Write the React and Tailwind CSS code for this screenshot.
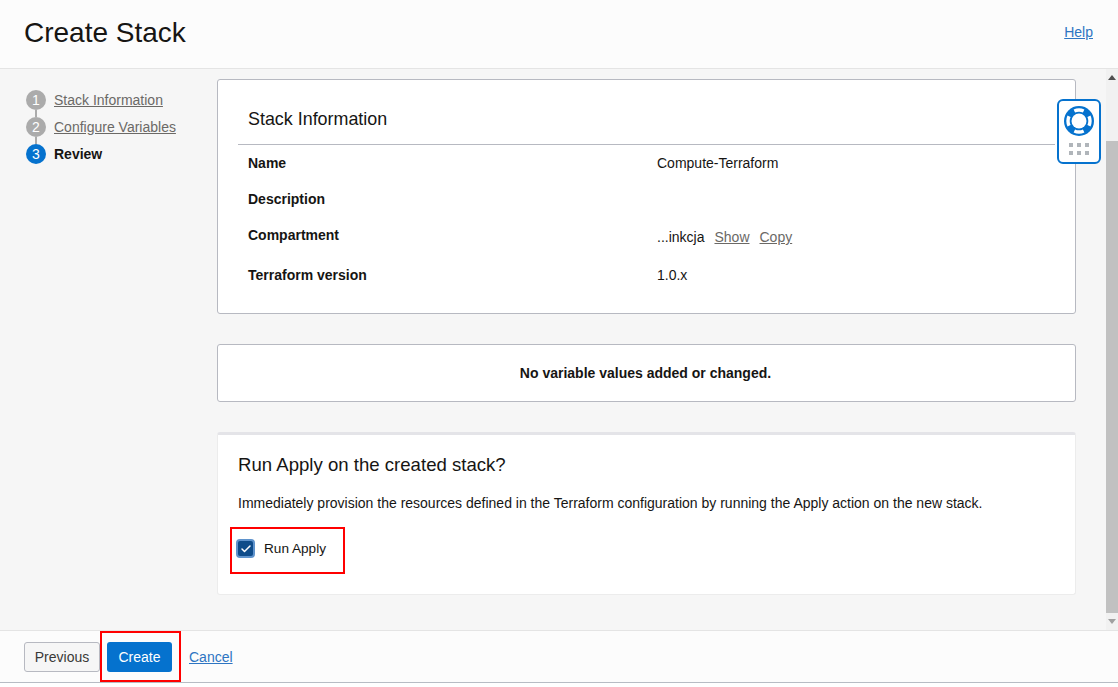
import { Check } from 'lucide-react';

const steps = [
    { n: 1, label: 'Stack Information' },
    { n: 2, label: 'Configure Variables' },
];

const InfoRow = ({ label, className, children }) => (
    <div className={`flex text-[14px] leading-4 text-[#161513] ${className}`}>
        <div className="w-[419px] pl-[10px] font-bold">{label}</div>
        <div className="flex-1">{children}</div>
    </div>
);

const HelpWidget = () => (
    <div className="absolute left-[1057px] top-[99px] w-[44px] h-[65px] bg-white border-2 border-[#0572ce] rounded-[6px] flex flex-col items-center pt-[5px]">
        <svg width="30" height="30" viewBox="0 0 30 30">
            <circle cx="15" cy="15" r="15" fill="#0572ce" />
            <circle cx="15" cy="15" r="11" fill="none" stroke="#fff" strokeWidth="3.4" pathLength="40" strokeDasharray="5.6 4.4" strokeDashoffset="2.8" />
            <circle cx="15" cy="15" r="7.5" fill="#fff" />
        </svg>
        <div className="grid grid-cols-3 gap-x-[4px] gap-y-[4px] mt-[7px]">
            {[0, 1, 2, 3, 4, 5].map((i) => (
                <span key={i} className="w-[4px] h-[4px] bg-[#b0b5ba]" />
            ))}
        </div>
    </div>
);

const App = () => {
    return (
        <div className="relative w-[1118px] h-[687px] overflow-hidden bg-white flex flex-col font-['Liberation_Sans',Arial,sans-serif] text-[#161513]">
            <header className="h-[69px] shrink-0 bg-[#fcfcfc] border-b border-[#e4e4e4] flex items-center justify-between pl-[24px] pr-[25px]">
                <h1 className="text-[28px] leading-8 mb-[2px]">Create Stack</h1>
                <a className="text-[14px] text-[#2e75c2] underline mb-[3px]">Help</a>
            </header>

            <div className="flex-1 min-h-0 flex bg-[#f6f6f6]">
                <nav className="w-[217px] shrink-0 pl-[26px] pt-[21px]">
                    <div className="flex flex-col">
                        {steps.map((s) => (
                            <div key={s.n} className="relative h-[27px] flex items-start">
                                <span className="w-[20px] h-[20px] rounded-full bg-[#ababab] text-white text-[14px] leading-5 text-center shrink-0">{s.n}</span>
                                <span className="absolute left-[9px] top-[20px] w-[2px] h-[7px] bg-[#ababab]" />
                                <a className="ml-[8px] text-[14px] leading-5 text-[#6b6966] underline">{s.label}</a>
                            </div>
                        ))}
                        <div className="h-[27px] flex items-start">
                            <span className="w-[20px] h-[20px] rounded-full bg-[#0572ce] text-white text-[14px] leading-5 text-center shrink-0">3</span>
                            <span className="ml-[8px] text-[14px] leading-5 font-bold">Review</span>
                        </div>
                    </div>
                </nav>

                <main className="w-[859px] shrink-0 pt-[10px] flex flex-col">
                    <section className="h-[235px] bg-white border border-[#b7b9c1] rounded-[3px] pl-[20px] pr-[20px]">
                        <h2 className="text-[17.9px] leading-6 pl-[10px] pt-[27px] pb-[13px] border-b border-[#b7b9c1]">Stack Information</h2>
                        <InfoRow label="Name" className="mt-[10px]">Compute-Terraform</InfoRow>
                        <InfoRow label="Description" className="mt-[20px]" />
                        <InfoRow label="Compartment" className="mt-[20px]">
                            <div className="flex gap-[10px] pt-[2px]">
                                <span>...inkcja</span>
                                <a className="text-[#6b6966] underline">Show</a>
                                <a className="text-[#6b6966] underline">Copy</a>
                            </div>
                        </InfoRow>
                        <InfoRow label="Terraform version" className="mt-[22px]">1.0.x</InfoRow>
                    </section>

                    <section className="mt-[30px] h-[58px] bg-white border border-[#b7b9c1] rounded-[3px] flex items-center justify-center pr-[2px] text-[14px] font-bold">
                        No variable values added or changed.
                    </section>

                    <section className="mt-[30px] h-[163px] bg-white border border-[#ececec] border-t-[3px] border-t-[#e4e4e8] rounded-[3px] pl-[20px]">
                        <h2 className="text-[18.6px] leading-6 pt-[18px]">Run Apply on the created stack?</h2>
                        <p className="text-[14px] leading-5 mt-[16px]">Immediately provision the resources defined in the Terraform configuration by running the Apply action on the new stack.</p>
                        <label className="flex items-center mt-[26px] -ml-[2px] text-[13.6px] leading-4">
                            <span className="w-[19px] h-[19px] rounded-[4px] bg-[#0f4c8a] border-2 border-[#5f93cc] flex items-center justify-center">
                                <Check size={12} strokeWidth={3} color="#fff" />
                            </span>
                            <span className="ml-[9px]">Run Apply</span>
                        </label>
                    </section>
                </main>

                <div className="ml-[30px] w-[12px] shrink-0 bg-[#f1f1f1] flex flex-col items-center">
                    <div className="h-[16px] flex items-center justify-center">
                        <span className="w-0 h-0 border-x-[4px] border-x-transparent border-b-[5px] border-b-[#505050]" />
                    </div>
                    <div className="w-full mt-[56px] h-[472px] bg-[#c1c1c1]" />
                    <div className="flex-1 flex items-center justify-center">
                        <span className="w-0 h-0 border-x-[4px] border-x-transparent border-t-[5px] border-t-[#a0a0a0]" />
                    </div>
                </div>
            </div>

            <footer className="h-[53px] shrink-0 bg-[#fcfcfc] border-t border-[#e4e4e4] border-b border-b-[#b7bcc4] flex items-center pl-[24px] pt-[1px] gap-[7px] mb-[4px]">
                <button className="h-[30px] w-[76px] rounded-[3px] border border-[#b7b9c1] bg-[#f6f6f6] text-[14px] text-[#3a3936]">Previous</button>
                <button className="h-[30px] w-[65px] rounded-[3px] bg-[#0572ce] text-[14px] text-white">Create</button>
                <a className="ml-[10px] text-[14px] text-[#2e75c2] underline">Cancel</a>
            </footer>

            <HelpWidget />
            <div className="absolute left-[230px] top-[527px] w-[115px] h-[47px] border-2 border-[#ff0000]" />
            <div className="absolute left-[100px] top-[631px] w-[81px] h-[51px] border-2 border-[#ff0000]" />
        </div>
    );
};

export default App;
